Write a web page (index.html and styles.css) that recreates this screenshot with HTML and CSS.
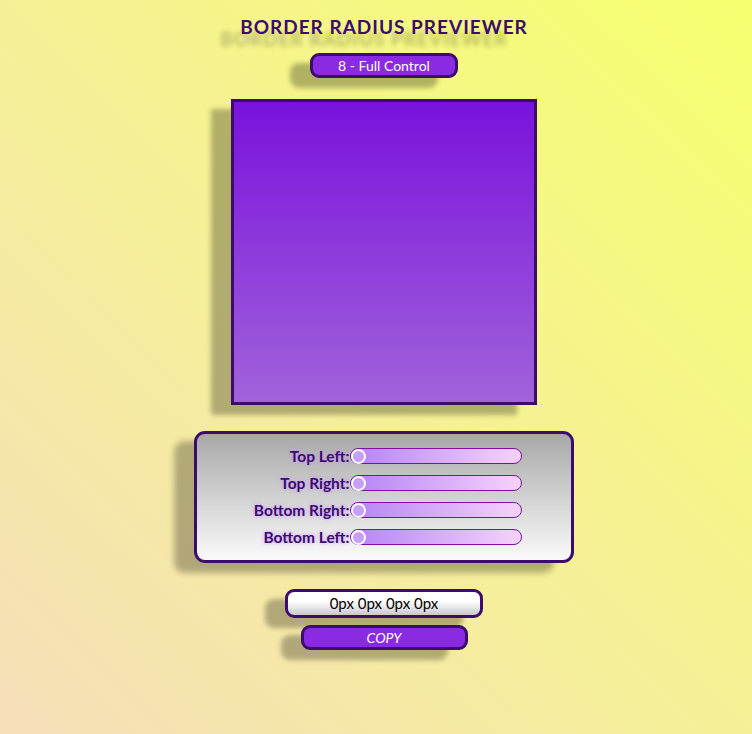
FILE: index.html
```html
<!DOCTYPE html>
<html lang="en">
<head>
<meta charset="utf-8">
<title>Border Radius Previewer</title>
<link rel="stylesheet" href="styles.css">
</head>
<body>
<main class="app">
  <h1 class="title">BORDER RADIUS PREVIEWER</h1>
  <button class="mode-btn">8 - Full Control</button>
  <div class="preview"></div>
  <section class="controls">
    <label class="ctl-label">Top Left:</label>
    <div class="track"><span class="thumb"></span></div>
    <label class="ctl-label">Top Right:</label>
    <div class="track"><span class="thumb"></span></div>
    <label class="ctl-label">Bottom Right:</label>
    <div class="track"><span class="thumb"></span></div>
    <label class="ctl-label">Bottom Left:</label>
    <div class="track"><span class="thumb"></span></div>
  </section>
  <div class="output">0px 0px 0px 0px</div>
  <button class="copy-btn">COPY</button>
</main>
</body>
</html>
```

FILE: styles.css
```css
html, body {
  margin: 0;
  height: 100%;
}
body {
  background: linear-gradient(to top right, #f6deb9 0%, #f5ef9a 45%, #f5ff6e 100%);
  font-family: "Comic Sans MS", "Lato", "DejaVu Sans", sans-serif;
  color: #3b0b6e;
}
.app {
  display: flex;
  flex-direction: column;
  align-items: center;
  padding: 15px 0 0 16px;
}
.title {
  margin: 0;
  font-size: 19px;
  font-weight: 700;
  letter-spacing: 1px;
  line-height: 24px;
  color: #3b0b6e;
  text-shadow: -20px 12px 5px rgba(0, 0, 0, 0.25);
}
.mode-btn, .copy-btn {
  font-family: inherit;
  background: #8a2be2;
  color: #fff;
  border: 3px solid #3b0b6e;
  border-radius: 9px;
  font-size: 14px;
  box-shadow: -20px 10px 5px rgba(0, 0, 0, 0.28);
  padding: 0;
}
.mode-btn {
  margin-top: 14px;
  width: 148px;
  height: 25px;
}
.preview {
  margin-top: 21px;
  width: 300px;
  height: 300px;
  border: 3px solid #3b0b6e;
  background: linear-gradient(to bottom, #7a12dc, #a163da);
  box-shadow: -20px 10px 5px rgba(0, 0, 0, 0.28);
}
.controls {
  margin-top: 26px;
  width: 374px;
  box-sizing: content-box;
  border: 3px solid #3b0b6e;
  border-radius: 11px;
  background: linear-gradient(to bottom, #a8a8a8, #fafafa);
  box-shadow: -20px 10px 6px rgba(0, 0, 0, 0.28);
  padding: 14px 0 15px;
  display: grid;
  grid-template-columns: 103px 172px;
  justify-content: center;
  align-items: center;
  row-gap: 11px;
}
.ctl-label {
  justify-self: end;
  white-space: nowrap;
  font-size: 15.5px;
  line-height: 16px;
  font-weight: 700;
  color: #3b0b6e;
  text-shadow: 0 0 4px #c890ff;
}
.track {
  height: 14px;
  border: 1px solid #7e10a6;
  border-radius: 8px;
  background: linear-gradient(to right, #b484f5, #f6d2fc);
  display: flex;
  align-items: center;
}
.thumb {
  width: 11px;
  height: 11px;
  border: 2px solid #fff;
  border-radius: 50%;
  background: #c6a0f4;
}
.output {
  margin-top: 26px;
  width: 192px;
  height: 23px;
  border: 3px solid #3b0b6e;
  border-radius: 9px;
  background: linear-gradient(to bottom, #ffffff 40%, #c8c8c8);
  color: #000;
  font-size: 15px;
  line-height: 23px;
  text-align: center;
  box-shadow: -20px 10px 5px rgba(0, 0, 0, 0.28);
}
.copy-btn {
  margin-top: 7px;
  width: 167px;
  height: 25px;
  font-style: italic;
}
```
